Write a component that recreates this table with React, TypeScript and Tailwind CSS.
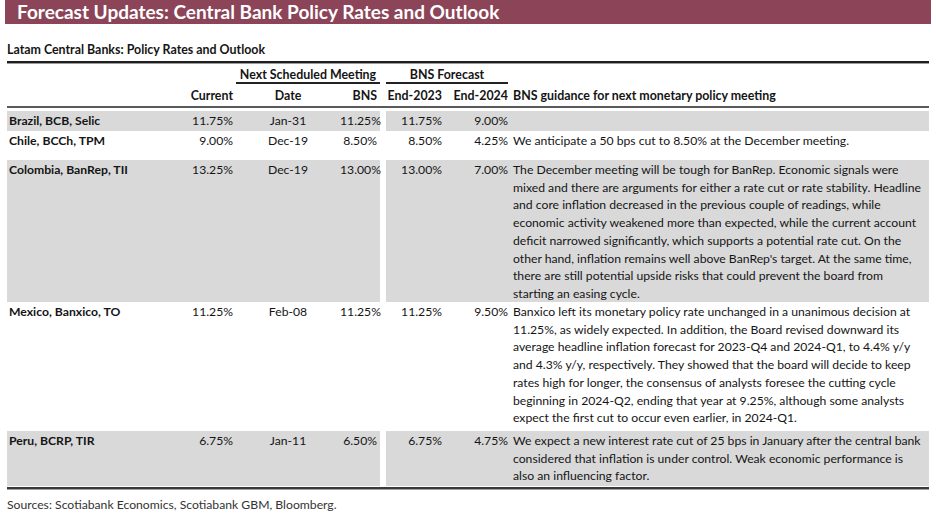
const rows = [
  {
    name: 'Brazil, BCB, Selic',
    current: '11.75%',
    date: 'Jan-31',
    bns: '11.25%',
    end23: '11.75%',
    end24: '9.00%',
    guide: [],
    shade: true,
    h: 'h-[20px]',
  },
  {
    name: 'Chile, BCCh, TPM',
    current: '9.00%',
    date: 'Dec-19',
    bns: '8.50%',
    end23: '8.50%',
    end24: '4.25%',
    guide: ['We anticipate a 50 bps cut to 8.50% at the December meeting.'],
    shade: false,
    h: 'h-[29px]',
  },
  {
    name: 'Colombia, BanRep, TII',
    current: '13.25%',
    date: 'Dec-19',
    bns: '13.00%',
    end23: '13.00%',
    end24: '7.00%',
    guide: [
      'The December meeting will be tough for BanRep. Economic signals were',
      'mixed and there are arguments for either a rate cut or rate stability. Headline',
      'and core inflation decreased in the previous couple of readings, while',
      'economic activity weakened more than expected, while the current account',
      'deficit narrowed significantly, which supports a potential rate cut. On the',
      "other hand, inflation remains well above BanRep's target. At the same time,",
      'there are still potential upside risks that could prevent the board from',
      'starting an easing cycle.',
    ],
    shade: true,
    h: 'h-[142px]',
  },
  {
    name: 'Mexico, Banxico, TO',
    current: '11.25%',
    date: 'Feb-08',
    bns: '11.25%',
    end23: '11.25%',
    end24: '9.50%',
    guide: [
      'Banxico left its monetary policy rate unchanged in a unanimous decision at',
      '11.25%, as widely expected. In addition, the Board revised downward its',
      'average headline inflation forecast for 2023-Q4 and 2024-Q1, to 4.4% y/y',
      'and 4.3% y/y, respectively. They showed that the board will decide to keep',
      'rates high for longer, the consensus of analysts foresee the cutting cycle',
      'beginning in 2024-Q2, ending that year at 9.25%, although some analysts',
      'expect the first cut to occur even earlier, in 2024-Q1.',
    ],
    shade: false,
    h: 'h-[129px]',
  },
  {
    name: 'Peru, BCRP, TIR',
    current: '6.75%',
    date: 'Jan-11',
    bns: '6.50%',
    end23: '6.75%',
    end24: '4.75%',
    guide: [
      'We expect a new interest rate cut of 25 bps in January after the central bank',
      'considered that inflation is under control. Weak economic performance is',
      'also an influencing factor.',
    ],
    shade: true,
    h: 'h-[55px]',
  },
];

export default function App() {
  return (
    <div className="w-[936px] h-[518px] bg-white font-['Lato',sans-serif] text-[#151515]">
      <div className="mx-[5px] h-[24px] bg-[#8b4458] pl-[12px] text-[19px] font-bold leading-[24px] text-white">
        Forecast Updates: Central Bank Policy Rates and Outlook
      </div>

      <div className="px-[7px]">
        <div className="mt-[18px] text-[12.4px] font-bold leading-[15px]">
          Latam Central Banks: Policy Rates and Outlook
        </div>
        <div className="mt-[4px] h-[2px] bg-[#1f1f1f]" />
        <div className="h-[1px] bg-[#9a9a9a]" />

        {/* group headings */}
        <div className="mt-[4px] flex text-[12.4px] font-bold leading-[14px]">
          <div className="w-[229px]" />
          <div className="w-[144px] border-b-2 border-[#222] text-center">Next Scheduled Meeting</div>
          <div className="w-[6px]" />
          <div className="w-[122px] border-b-2 border-[#222] text-center">BNS Forecast</div>
        </div>

        {/* column headings */}
        <div className="mt-[4px] flex text-[12.4px] font-bold leading-[15px]">
          <div className="w-[160px]" />
          <div className="w-[69px] pr-[3px] text-right">Current</div>
          <div className="w-[104px] text-center">Date</div>
          <div className="w-[40px] pr-[3px] text-right">BNS</div>
          <div className="w-[6px]" />
          <div className="w-[59px] pr-[3px] text-right">End-2023</div>
          <div className="w-[65px] pr-[2px] text-right">End-2024</div>
          <div className="pl-[3px]">BNS guidance for next monetary policy meeting</div>
        </div>

        <div className="mt-[3px] h-[2px] bg-[#5a5a5a]" />

        <div className="mt-[3px]">
          {rows.map((r) => (
            <div key={r.name} className={`flex text-[12.2px] leading-[17.7px] ${r.h}`}>
              <div className={`flex w-[373px] pt-[1px] ${r.shade ? 'bg-[#d9d9d9]' : ''}`}>
                <div className="w-[160px] pl-[2px] font-bold">{r.name}</div>
                <div className="w-[69px] pr-[3px] text-right">{r.current}</div>
                <div className="w-[104px] text-center">{r.date}</div>
                <div className="w-[40px] pr-[3px] text-right">{r.bns}</div>
              </div>
              <div className="w-[6px]" />
              <div className={`flex flex-1 pt-[1px] ${r.shade ? 'bg-[#d9d9d9]' : ''}`}>
                <div className="w-[59px] pr-[3px] text-right">{r.end23}</div>
                <div className="w-[65px] pr-[2px] text-right">{r.end24}</div>
                <div className="pl-[3px]">
                  {r.guide.map((line) => (
                    <div key={line} className="whitespace-nowrap">{line}</div>
                  ))}
                </div>
              </div>
            </div>
          ))}
        </div>

        <div className="mt-[1px] h-[2px] bg-[#3a3a3a]" />
        <div className="h-[1px] bg-[#a0a0a0]" />

        <div className="mt-[7px] text-[12.2px] leading-[15px] text-[#333]">
          Sources: Scotiabank Economics, Scotiabank GBM, Bloomberg.
        </div>
      </div>
    </div>
  );
}
